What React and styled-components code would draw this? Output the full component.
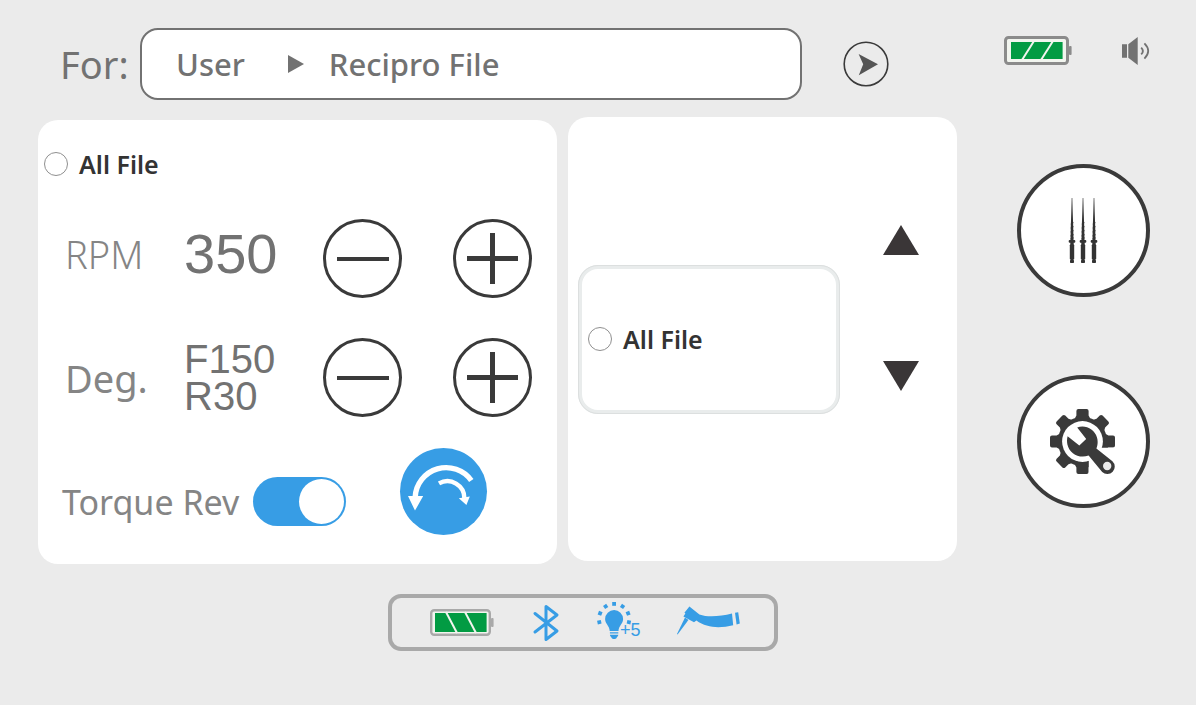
import { useState } from 'react';
import styled, { createGlobalStyle } from 'styled-components';

const GlobalStyle = createGlobalStyle`
  *, *::before, *::after {
    box-sizing: border-box;
  }
  body {
    margin: 0;
    background: #ebebeb;
    color: #727272;
    font-family: "Noto Sans", "Open Sans", sans-serif;
  }
`;

const Screen = styled.div`
  min-height: 100vh;
  padding: 28px 0;
`;

const Header = styled.header`
  display: flex;
  align-items: center;
  padding: 0 46px 0 60px;
`;
const ForLabel = styled.span`
  flex: 0 0 80px;
  font-size: 38px;
  line-height: 70px;
`;
const PathBox = styled.nav`
  flex: 1;
  display: flex;
  align-items: center;
  height: 72px;
  padding: 0 34px;
  background: #fff;
  border: 2px solid #727272;
  border-radius: 18px;
  font-size: 31px;
  font-weight: 500;
  line-height: 40px;
  white-space: nowrap;
  svg {
    margin: 0 25px 0 43px;
  }
`;
const SendButton = styled.button`
  width: 46px;
  height: 46px;
  margin: 0 115px 0 41px;
  padding: 0;
  border: 0;
  background: none;
  cursor: pointer;
  svg {
    display: block;
  }
`;
const Status = styled.div`
  align-self: flex-start;
  display: flex;
  align-items: center;
  gap: 50px;
  padding-top: 8px;
`;

const Main = styled.main`
  display: grid;
  grid-template-columns: 519fr 389fr 212px;
  column-gap: 11px;
  padding: 0 16px 0 38px;
  margin-top: 17px;
`;
const Panel = styled.section`
  min-height: 444px;
  background: #fff;
  border-radius: 20px;
`;
const SettingsPanel = styled(Panel)`
  margin-top: 3px;
  padding: 27px 25px 29px 6px;
`;
const FilesPanel = styled(Panel)`
  display: flex;
  align-items: center;
  align-self: start;
  padding: 0 38px 0 10px;
`;

const RadioLabel = styled.label`
  display: flex;
  align-items: center;
  gap: 11px;
  color: #333;
  font-size: 25px;
  font-weight: 600;
  line-height: 34px;
  white-space: nowrap;
`;
const Radio = styled.input`
  appearance: none;
  width: 24px;
  height: 24px;
  margin: 0;
  border: 1px solid #8f8f8f;
  border-radius: 50%;
  background: #fff;
  cursor: pointer;
  &:checked {
    background: #379de5;
    box-shadow: inset 0 0 0 4px #fff;
  }
`;

const Rows = styled.div`
  display: flex;
  flex-direction: column;
  gap: 40px;
  margin-top: 38px;
  padding-left: 21px;
`;
const Row = styled.div`
  display: grid;
  grid-template-columns: 119px 1fr auto;
  align-items: center;
`;
const RowName = styled.span`
  padding-bottom: ${(props) => (props.$light ? 10 : 0)}px;
  color: #858585;
  font-size: 38px;
  font-weight: ${(props) => (props.$light ? 300 : 400)};
  line-height: 48px;
`;
const RowValue = styled.output`
  padding-bottom: ${(props) => (props.$small ? 0 : 10)}px;
  font-family: "Liberation Sans", Arial, sans-serif;
  font-size: ${(props) => (props.$small ? 40 : 56)}px;
  line-height: ${(props) => (props.$small ? 37 : 56)}px;
  div {
    white-space: nowrap;
  }
`;
const StepGroup = styled.div`
  display: flex;
  gap: 51px;
`;
const StepButton = styled.button`
  width: 79px;
  height: 79px;
  padding: 0;
  border: 3px solid #3a3a3a;
  border-radius: 50%;
  background: #fff;
  cursor: pointer;
  svg {
    display: block;
    margin: auto;
  }
`;

const TorqueRow = styled.div`
  display: flex;
  align-items: center;
  gap: 54px;
  margin-top: 31px;
  padding-left: 18px;
`;
const TorqueLabel = styled.label`
  display: flex;
  align-items: center;
  gap: 14px;
  padding-top: 20px;
  color: #858585;
  font-size: 34px;
  line-height: 48px;
  white-space: nowrap;
`;
const Toggle = styled.input`
  appearance: none;
  flex: none;
  display: flex;
  justify-content: ${(props) => (props.checked ? 'flex-end' : 'flex-start')};
  width: 93px;
  height: 49px;
  margin: 0;
  padding: 2px;
  border-radius: 25px;
  background: ${(props) => (props.checked ? '#379de5' : '#a9a9a9')};
  cursor: pointer;
  &::before {
    content: '';
    width: 45px;
    height: 45px;
    border-radius: 50%;
    background: #fff;
  }
`;
const ReverseButton = styled.button`
  width: 87px;
  height: 87px;
  padding: 0;
  border: 0;
  border-radius: 50%;
  background: #379de5;
  cursor: pointer;
  svg {
    display: block;
  }
`;

const FileCard = styled.div`
  flex: 1;
  display: flex;
  align-items: center;
  height: 149px;
  padding: 6px;
  border: 4px solid #e9ecec;
  border-radius: 20px;
  outline: 1px solid #dcdfdf;
  outline-offset: -1px;
`;
const ArrowGroup = styled.div`
  align-self: flex-start;
  display: flex;
  flex-direction: column;
  gap: 106px;
  margin: 108px 0 0 43px;
`;
const ArrowButton = styled.button`
  padding: 0;
  border: 0;
  background: none;
  cursor: pointer;
  svg {
    display: block;
  }
`;

const Side = styled.aside`
  display: flex;
  flex-direction: column;
  align-items: center;
  gap: 78px;
  padding: 47px 0 0 18px;
`;
const RoundButton = styled.button`
  display: flex;
  align-items: center;
  justify-content: center;
  width: 133px;
  height: 133px;
  padding: 0;
  border: 4px solid #3a3a3a;
  border-radius: 50%;
  background: #fff;
  cursor: pointer;
`;

const Footer = styled.footer`
  display: flex;
  justify-content: center;
  margin-top: 30px;
  padding-right: 30px;
`;
const Dock = styled.div`
  display: flex;
  align-items: center;
  justify-content: space-between;
  width: 390px;
  height: 57px;
  padding: 0 34px 0 38px;
  border: 4px solid #a9a9a9;
  border-radius: 13px;
  svg {
    flex: none;
    overflow: visible;
  }
`;

function Battery({ width, height, inset, color, slashes }) {
  const stroke = width > 62 ? 3 : 2.4;
  return (
    <svg width={width + 3} height={height} role="img" aria-label="Battery">
      <rect
        x={stroke / 2}
        y={stroke / 2}
        width={width - stroke}
        height={height - stroke}
        rx="3"
        fill="#f2f5ef"
        stroke={color}
        strokeWidth={stroke}
      />
      <rect x={width} y={height / 2 - 4.5} width="2.6" height="9" rx="1" fill={color} />
      <rect x={inset} y={inset - 1} width="51.6" height={height - inset * 2 + 2} fill="#029b43" />
      {slashes.map(([x1, x2]) => (
        <line
          key={x1}
          x1={x1}
          y1={inset - 2}
          x2={x2}
          y2={height - inset + 2}
          stroke="#f2f5ef"
          strokeWidth="2"
        />
      ))}
    </svg>
  );
}

function Speaker() {
  return (
    <svg width="28" height="28" viewBox="0 0 28 28" role="img" aria-label="Sound">
      <path d="M0 7.3h5v13.4H0zM6.3 7.3 15.7 0v28L6.3 20.7z" fill="#727272" />
      <path d="M19.2 10.6q3.4 3.4 0 6.8" fill="none" stroke="#727272" strokeWidth="1.8" />
      <path d="M22.4 6.4q7.6 7.6 0 15.2" fill="none" stroke="#727272" strokeWidth="1.8" />
    </svg>
  );
}

function Needle({ x }) {
  return (
    <g transform={`translate(${x} 0)`}>
      <path d="M-.3 0H.3L.7 14 1.2 28 1.5 42H-1.5L-1.2 28-.7 14Z" />
      <path
        d="M-1.3 26 1.7 24.6M-1.5 30 1.8 28.6M-1.7 34 1.9 32.6M-1.8 38 2 36.6M-1.9 41 2 39.8"
        stroke="#333"
        strokeWidth=".6"
      />
      <rect x="-3.3" y="42" width="6.6" height="2.8" rx="1" />
      <rect x="-1.7" y="44" width="3.4" height="4" />
      <rect x="-2.2" y="46.5" width="4.4" height="15" rx=".8" />
      <rect x="-1.4" y="61" width="2.8" height="2" />
      <rect x="-2" y="62" width="4" height="3" rx=".8" />
    </g>
  );
}

function NeedlesIcon() {
  return (
    <svg width="30" height="66" viewBox="0 0 30 66" fill="#333" aria-hidden="true">
      <Needle x={4} />
      <Needle x={15} />
      <Needle x={26} />
    </svg>
  );
}

function GearIcon() {
  return (
    <svg width="66" height="66" viewBox="0 0 66 66" aria-hidden="true">
      <g fill="#3a3a3a">
        <circle cx="32.5" cy="32.5" r="24.6" />
        {[0, 45, 90, 180, 225, 270, 315].map((angle) => (
          <path
            key={angle}
            d="M24.5 10 26.4 6.6V2Q26.4 0 28.4 0H36.6Q38.6 0 38.6 2V6.6L40.5 10Z"
            transform={`rotate(${angle} 32.5 32.5)`}
          />
        ))}
      </g>
      <circle cx="32.5" cy="32.5" r="20.4" fill="#fff" />
      <path d="M38.8 46V66H66V38.8H46Z" fill="#fff" />
      <path
        d="M17.6 27.3 29.3 36.6 36.2 30 27.2 18.6C35 15.4 44.5 20 47 28.5C48.2 32.4 47.6 36.4 46.4 39.4L62.4 52.2A7.4 7.4 0 0 1 52.2 63L38.6 46.6C29 50 19.4 44.6 17.4 35.4C16.8 32.4 16.9 30 17.6 27.3Z"
        fill="#3a3a3a"
      />
      <circle cx="57.2" cy="57" r="4.2" fill="#ebebeb" />
    </svg>
  );
}

function ReverseIcon() {
  return (
    <svg width="87" height="87" viewBox="0 0 87 87" fill="none" stroke="#fff" aria-hidden="true">
      <path d="M71.3 32.5A31 31 0 0 0 15.2 49" strokeWidth="5.4" />
      <path d="M39 35.4A17 17 0 0 1 64.4 50.5" strokeWidth="4.4" />
      <path d="M8 48H23.2L15 62.6ZM58.8 50.2 69.8 48.4 66.4 57Z" fill="#fff" stroke="none" />
    </svg>
  );
}

function BluetoothIcon() {
  return (
    <svg width="26" height="38" viewBox="0 0 26 38" role="img" aria-label="Bluetooth">
      <path
        d="M2 9.5 24 27 13 35.5V2.5L24 11 2 28"
        fill="none"
        stroke="#379de5"
        strokeWidth="3"
        strokeLinecap="round"
        strokeLinejoin="round"
      />
    </svg>
  );
}

function BulbIcon() {
  return (
    <svg width="40" height="44" viewBox="0 0 40 44" fill="#379de5" role="img" aria-label="Light level">
      {[-102, -68, -34, 0, 34, 68, 102].map((angle) => (
        <rect
          key={angle}
          x="14.2"
          y="1"
          width="3.8"
          height="3.8"
          transform={`rotate(${angle} 16.1 18)`}
        />
      ))}
      <path d="M16.1 9a9 9 0 0 1 9 9c0 5-4.4 6.6-4.6 12h-8.8c-.2-5.4-4.6-7-4.6-12a9 9 0 0 1 9-9z" />
      <path d="M11.9 31.2h8.4v1.4h-8.4zM11.9 33.8h8.4c0 1.6-1.4 2-1.8 3.2-.6 1.4-4.2 1.4-4.8 0-.4-1.2-1.8-1.6-1.8-3.2z" />
      <text x="22" y="35" fontSize="18" fontFamily="Liberation Sans, Arial, sans-serif">
        +5
      </text>
    </svg>
  );
}

function HandpieceIcon() {
  return (
    <svg width="63" height="34" viewBox="0 0 63 34" fill="#379de5" role="img" aria-label="Handpiece">
      <path d="M12.4.4 22.4 8.4C31 11.4 43 10.4 55 7.4L56.2 19.2C43 22.4 30 22.2 19.4 14.6L17 16.2 6.4 10.6 8.4 7.6 7.4 6.8Z" />
      <path d="M8 11.6 11.4 14 .6 28.4 0 28Z" />
      <path d="M58 6.8 61.2 6.2 62.8 17.6 59.6 18.4Z" />
    </svg>
  );
}

function Stepper({ name }) {
  return (
    <StepGroup>
      <StepButton type="button" aria-label={`Decrease ${name}`}>
        <svg width="52" height="52">
          <path d="M0 26H52" stroke="#3a3a3a" strokeWidth="4" />
        </svg>
      </StepButton>
      <StepButton type="button" aria-label={`Increase ${name}`}>
        <svg width="51" height="51">
          <path d="M0 25.5H51M25.5 0V51" stroke="#3a3a3a" strokeWidth="5" />
        </svg>
      </StepButton>
    </StepGroup>
  );
}

export default function App() {
  const [torqueRev, setTorqueRev] = useState(true);

  return (
    <Screen>
      <GlobalStyle />
      <Header>
        <ForLabel>For:</ForLabel>
        <PathBox>
          <span>User</span>
          <svg width="16" height="18" aria-hidden="true">
            <path d="M0 0 16 9 0 18Z" fill="#727272" />
          </svg>
          <span>Recipro File</span>
        </PathBox>
        <SendButton type="button" aria-label="Next">
          <svg width="46" height="46">
            <circle cx="23" cy="23" r="21.8" fill="none" stroke="#3a3a3a" strokeWidth="1.6" />
            <path d="M15.6 13 35 23.3 15.8 34.3 20.2 23.3Z" fill="#555" />
          </svg>
        </SendButton>
        <Status>
          <Battery
            width={65}
            height={29}
            inset={7}
            color="#8b8b8b"
            slashes={[[30, 18], [49, 37]]}
          />
          <Speaker />
        </Status>
      </Header>

      <Main>
        <SettingsPanel>
          <RadioLabel>
            <Radio type="radio" name="settings-scope" />
            All File
          </RadioLabel>
          <Rows>
            <Row>
              <RowName $light>RPM</RowName>
              <RowValue>350</RowValue>
              <Stepper name="RPM" />
            </Row>
            <Row>
              <RowName>Deg.</RowName>
              <RowValue $small>
                <div>F150</div>
                <div>R30</div>
              </RowValue>
              <Stepper name="degrees" />
            </Row>
          </Rows>
          <TorqueRow>
            <TorqueLabel>
              Torque Rev
              <Toggle
                type="checkbox"
                role="switch"
                checked={torqueRev}
                onChange={(e) => setTorqueRev(e.target.checked)}
              />
            </TorqueLabel>
            <ReverseButton type="button" aria-label="Reverse direction">
              <ReverseIcon />
            </ReverseButton>
          </TorqueRow>
        </SettingsPanel>

        <FilesPanel>
          <FileCard>
            <RadioLabel>
              <Radio type="radio" name="file" />
              All File
            </RadioLabel>
          </FileCard>
          <ArrowGroup>
            <ArrowButton type="button" aria-label="Previous file">
              <svg width="36" height="30">
                <path d="M18 0 36 30H0Z" fill="#3a3637" />
              </svg>
            </ArrowButton>
            <ArrowButton type="button" aria-label="Next file">
              <svg width="36" height="30">
                <path d="M0 0H36L18 30Z" fill="#3a3637" />
              </svg>
            </ArrowButton>
          </ArrowGroup>
        </FilesPanel>

        <Side>
          <RoundButton type="button" aria-label="Files">
            <NeedlesIcon />
          </RoundButton>
          <RoundButton type="button" aria-label="Settings">
            <GearIcon />
          </RoundButton>
        </Side>
      </Main>

      <Footer>
        <Dock>
          <Battery
            width={61}
            height={27}
            inset={5}
            color="#a9a9a9"
            slashes={[[16, 27], [35, 46]]}
          />
          <BluetoothIcon />
          <BulbIcon />
          <HandpieceIcon />
        </Dock>
      </Footer>
    </Screen>
  );
}
